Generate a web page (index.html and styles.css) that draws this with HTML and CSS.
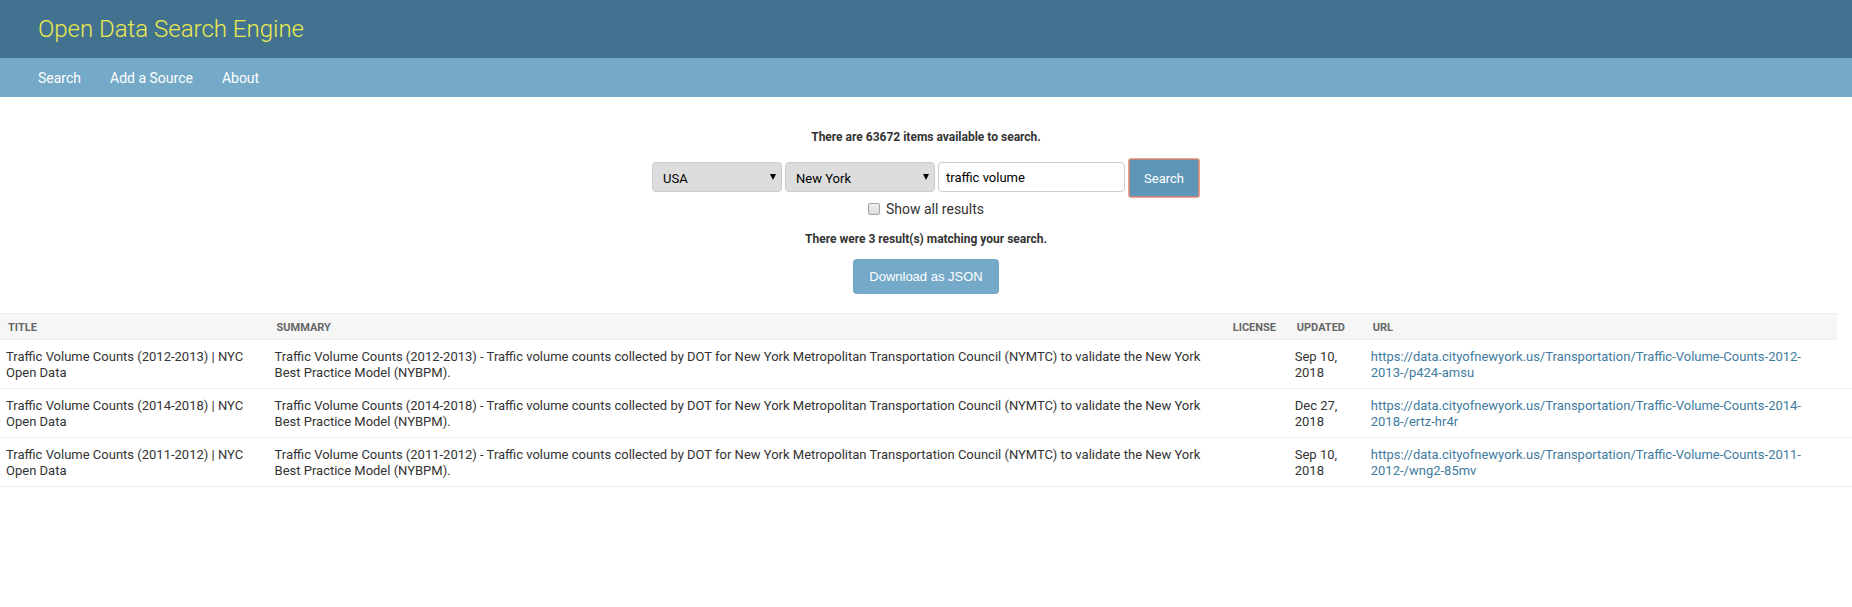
FILE: index.html
```html
<!DOCTYPE html>
<html lang="en">
<head>
<meta charset="utf-8">
<meta name="viewport" content="width=device-width, initial-scale=1">
<title>Open Data Search Engine</title>
<link rel="stylesheet" href="styles.css">
</head>
<body>
<header class="site-header">
  <h1 class="site-name">Open Data Search Engine</h1>
</header>
<nav class="site-nav">
  <a href="#search">Search</a>
  <a href="#add">Add a Source</a>
  <a href="#about">About</a>
</nav>
<main>
  <section class="search-panel">
    <h4 class="notice">There are 63672 items available to search.</h4>
    <form class="search-form">
      <div class="search-row">
        <span class="select-wrap country">
          <select aria-label="Country"><option>USA</option></select>
          <svg class="arrow" viewBox="0 0 6 6" aria-hidden="true"><path d="M0 0h6L3 6z"/></svg>
        </span>
        <span class="select-wrap region">
          <select aria-label="Region"><option>New York</option></select>
          <svg class="arrow" viewBox="0 0 6 6" aria-hidden="true"><path d="M0 0h6L3 6z"/></svg>
        </span>
        <input class="query" type="text" aria-label="Search terms" value="traffic volume">
        <button class="button search-button" type="button">Search</button>
      </div>
      <label class="show-all"><input type="checkbox">Show all results</label>
    </form>
    <h4 class="notice">There were 3 result(s) matching your search.</h4>
    <button class="button download-button" type="button">Download as JSON</button>
  </section>
  <table class="results">
    <colgroup>
      <col class="col-title"><col><col class="col-license"><col class="col-updated"><col class="col-url"><col class="col-end">
    </colgroup>
    <thead>
      <tr><th>Title</th><th>Summary</th><th>License</th><th>Updated</th><th>URL</th></tr>
    </thead>
    <tbody>
      <tr>
        <td>Traffic Volume Counts (2012-2013) | NYC Open Data</td>
        <td>Traffic Volume Counts (2012-2013) - Traffic volume counts collected by DOT for New York Metropolitan Transportation Council (NYMTC) to validate the New York Best Practice Model (NYBPM).</td>
        <td></td>
        <td>Sep 10, 2018</td>
        <td><a href="#p424-amsu">https://data.cityofnewyork.us/Transportation/Traffic-Volume-Counts-2012-2013-/p424-amsu</a></td>
        <td></td>
      </tr>
      <tr>
        <td>Traffic Volume Counts (2014-2018) | NYC Open Data</td>
        <td>Traffic Volume Counts (2014-2018) - Traffic volume counts collected by DOT for New York Metropolitan Transportation Council (NYMTC) to validate the New York Best Practice Model (NYBPM).</td>
        <td></td>
        <td>Dec 27, 2018</td>
        <td><a href="#ertz-hr4r">https://data.cityofnewyork.us/Transportation/Traffic-Volume-Counts-2014-2018-/ertz-hr4r</a></td>
        <td></td>
      </tr>
      <tr>
        <td>Traffic Volume Counts (2011-2012) | NYC Open Data</td>
        <td>Traffic Volume Counts (2011-2012) - Traffic volume counts collected by DOT for New York Metropolitan Transportation Council (NYMTC) to validate the New York Best Practice Model (NYBPM).</td>
        <td></td>
        <td>Sep 10, 2018</td>
        <td><a href="#wng2-85mv">https://data.cityofnewyork.us/Transportation/Traffic-Volume-Counts-2011-2012-/wng2-85mv</a></td>
        <td></td>
      </tr>
    </tbody>
  </table>
</main>
</body>
</html>
```
FILE: styles.css
```css
* {
  box-sizing: border-box;
}

body {
  margin: 0;
  background: #fff;
  color: #333;
  font-family: Roboto, "Liberation Sans", sans-serif;
  font-size: 14px;
}

a {
  color: #417ba0;
  text-decoration: none;
}

.site-header {
  padding: 14px 38px;
  background: #417290;
}

.site-name {
  margin: 0;
  color: #ece94e;
  font-size: 24px;
  font-weight: 300;
  line-height: 30px;
}

.site-nav {
  display: flex;
  gap: 29px;
  padding: 11px 38px 9px;
  background: #74a9c8;
  line-height: 19px;
}

.site-nav a {
  color: #fff;
}

.search-panel {
  display: flex;
  flex-direction: column;
  align-items: center;
  padding: 31px 0 19px;
}

.notice {
  margin: 0;
  font-size: 12px;
  font-weight: bold;
  line-height: 18px;
}

.search-form {
  display: flex;
  flex-direction: column;
  align-items: center;
  padding: 12px 0;
}

.search-row {
  display: flex;
  align-items: flex-start;
  gap: 3px;
}

.select-wrap {
  display: flex;
  position: relative;
}

.select-wrap,
.query {
  margin-top: 4px;
}

.country {
  width: 130px;
}

.region {
  width: 150px;
}

.select-wrap select {
  appearance: none;
  width: 100%;
  height: 30px;
  padding: 3px 10px 0;
  border: 1px solid #ccc;
  border-radius: 4px;
  background: #ddd;
  color: #000;
  font-family: inherit;
  font-size: 13px;
}

.arrow {
  position: absolute;
  top: 12px;
  right: 6px;
  width: 6px;
  height: 6px;
  fill: #000;
  pointer-events: none;
}

.query {
  width: 187px;
  height: 30px;
  padding: 5px 7px;
  border: 1px solid #ccc;
  border-radius: 4px;
  background: #fff;
  color: #000;
  font-family: inherit;
  font-size: 13px;
}

.button {
  border: 0;
  border-radius: 4px;
  background: #74a9c8;
  color: #fff;
}

.search-button {
  height: 40px;
  padding: 0 15px;
  border: 1px solid #f0a58c;
  border-radius: 3px;
  background: #5e96b7;
  box-shadow: inset 0 0 0 1px #b98880;
  font-family: inherit;
  font-size: 13px;
}

.download-button {
  height: 35px;
  margin-top: 11px;
  padding: 0 16px;
  font-family: "Liberation Sans", Arial, sans-serif;
  font-size: 13px;
}

.show-all {
  display: flex;
  align-items: center;
  gap: 6px;
  margin-top: 2px;
  line-height: 18px;
}

.show-all input {
  appearance: none;
  width: 12px;
  height: 12px;
  margin: 0;
  border: 1px solid #a5a5a5;
  border-radius: 2px;
  background: linear-gradient(#eee, #ddd);
}

.results {
  width: 100%;
  border-collapse: collapse;
  table-layout: fixed;
}

.col-title {
  width: 14.5%;
}

.col-license {
  width: 64px;
}

.col-updated {
  width: 76px;
}

.col-url {
  width: 25.5%;
}

.col-end {
  width: 15px;
}

.results th {
  padding: 6px 8px 4px;
  border-top: 1px solid #eee;
  border-bottom: 1px solid #eee;
  background: #f6f6f6;
  color: #666;
  font-size: 11px;
  font-weight: bold;
  line-height: 15px;
  text-align: left;
  text-transform: uppercase;
}

.results td {
  padding: 9px 6px 7px;
  border-bottom: 1px solid #eee;
  font-size: 13px;
  line-height: 16px;
  vertical-align: top;
}
```
